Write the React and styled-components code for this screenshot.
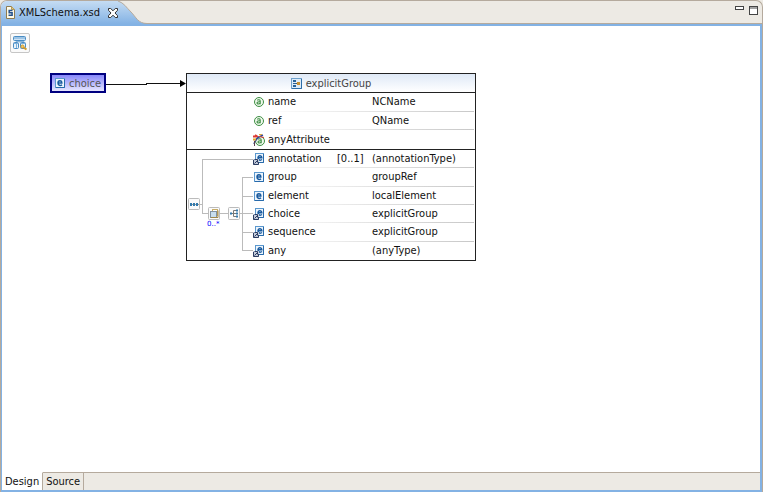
import React from "react";
import styled, { createGlobalStyle } from "styled-components";

const GlobalStyle = createGlobalStyle`
  * {
    box-sizing: border-box;
  }
  body {
    margin: 0;
    background: #edeae4;
    color: #111;
    font-family: "DejaVu Sans Condensed", "DejaVu Sans", sans-serif;
    font-size: 11px;
  }
  button {
    margin: 0;
    padding: 0;
    border: 0;
    background: none;
    color: inherit;
    font: inherit;
  }
  svg {
    display: block;
    flex-shrink: 0;
  }
`;

const Editor = styled.div`
  display: flex;
  flex-direction: column;
  min-height: 100vh;
  border: 1px solid #b5aa9d;
  border-bottom: 0;
  border-radius: 7px 7px 0 0;
  background: #edeae4;
  overflow: hidden;
`;

const TitleBar = styled.header`
  display: flex;
  height: 23px;
  border-bottom: 1px solid #b5aa9d;
`;

const FileTab = styled.div`
  display: flex;
  align-items: center;
  gap: 8px;
  height: 23px;
  padding-left: 4px;
  background: linear-gradient(#c5dcf3, #83b2e4);
`;

const FileName = styled.button`
  display: flex;
  align-items: center;
  gap: 3px;
`;

const WindowButtons = styled.div`
  display: flex;
  align-items: flex-start;
  gap: 5px;
  margin-left: auto;
  padding: 5px 4px 0 0;
`;

const Body = styled.main`
  display: flex;
  flex: 1;
  flex-direction: column;
  border: 2px solid #83b2e4;
  border-left-width: 1px;
  background: #fff;
`;

const Canvas = styled.div`
  flex: 1;
  padding: 7px 8px 20px;
`;

const ToolButton = styled.button`
  display: flex;
  align-items: center;
  justify-content: center;
  width: 20px;
  height: 20px;
  border: 1px solid #c6c6c6;
  border-radius: 2px;
  background: #fafafa;
`;

const Diagram = styled.div`
  display: flex;
  align-items: flex-start;
  padding: 20px 0 0 40px;
`;

const Node = styled.button`
  display: flex;
  align-items: center;
  gap: 3px;
  width: 56px;
  height: 20px;
  padding-left: 2px;
  border: 2px solid #000080;
  background: linear-gradient(#8888fa, #e6e6ff);
  color: #555;
`;

const Group = styled.section`
  width: 290px;
  border: 1px solid #222;
`;

const GroupHeader = styled.h1`
  display: flex;
  align-items: center;
  justify-content: center;
  gap: 4px;
  height: 18px;
  margin: 0;
  background: linear-gradient(#dfe9f6, #fff);
  color: #444;
  font-size: 11px;
  font-weight: normal;
`;

const Compartment = styled.div`
  display: flex;
  border-top: 1px solid #222;
`;

const TreeColumn = styled.div`
  width: 66px;
`;

const Fields = styled.table`
  flex: 1;
  height: ${props => props.$height};
  margin-right: 1px;
  border-collapse: collapse;
  table-layout: fixed;
`;

const Field = styled.tr`
  background: linear-gradient(90deg, #fff 10px, #c8c8c8) bottom / 100% 1px
    no-repeat;

  &:last-child {
    background: none;
  }
`;

const Cell = styled.td`
  width: ${props => props.$width};
  padding: 0;
  line-height: 16px;
  white-space: nowrap;
`;

const FieldName = styled.div`
  display: flex;
  align-items: center;
  gap: 3px;
`;

const PageTabs = styled.nav`
  display: flex;
  height: 18px;
  background: #edeae4;
`;

const PageTab = styled.button`
  padding: 0 3px;
  border-top: 1px solid ${props => (props.$active ? "#fff" : "#b5aa9d")};
  border-right: 1px solid #b5aa9d;
  background: ${props => (props.$active ? "#fff" : "#edeae4")};
`;

const TabsFill = styled.div`
  flex: 1;
  border-top: 1px solid #b5aa9d;
`;

const FileIcon = () => (
  <svg width="11" height="13" viewBox="0 0 11 13">
    <path d="M1.5 .5h5l3 3v9h-8z" fill="#fffbe8" stroke="#8f7b50" />
    <path d="M6.5 .5v3h3" fill="#e6c978" stroke="#b39a5a" />
    <path
      d="M7.5 4.5H4.2v2.2h2.9v2.6H3.5"
      fill="none"
      stroke="#24508c"
      strokeWidth="1.5"
    />
  </svg>
);

const CloseIcon = () => (
  <svg width="10" height="10" viewBox="0 0 10 10">
    <path
      d="M.5 .5h2.2L5 2.8 7.3 .5h2.2v1.8L7 5l2.5 2.7v1.8H7.3L5 7.2 2.7 9.5H.5V7.7L3 5 .5 2.3z"
      fill="#fff"
      stroke="#333"
    />
  </svg>
);

const TabCurve = () => (
  <svg width="32" height="23" viewBox="0 0 32 23">
    <defs>
      <linearGradient id="tabFill" x2="0" y2="1">
        <stop stopColor="#c5dcf3" />
        <stop offset="1" stopColor="#83b2e4" />
      </linearGradient>
    </defs>
    <path
      d="M0 0C6 2 8 6 13 11S20 22.5 29 22.5H32V23H0z"
      fill="url(#tabFill)"
    />
    <path
      d="M0 0C6 2 8 6 13 11S20 22.5 29 22.5H32"
      fill="none"
      stroke="#b5aa9d"
    />
  </svg>
);

const SchemaIcon = () => (
  <svg width="16" height="16" viewBox="0 0 16 16">
    <path d="M8 5v3M4 8.5V6.5h8v2" fill="none" stroke="#8ab6da" />
    <rect
      x="1.5"
      y="1.5"
      width="12"
      height="4"
      rx="1"
      fill="#cfe4f6"
      stroke="#4a8dc4"
    />
    <path d="M2 3h11" stroke="#6ba5d5" />
    <rect
      x="1.5"
      y="7.5"
      width="5"
      height="6"
      rx="1"
      fill="#e8f3fb"
      stroke="#4a8dc4"
    />
    <rect
      x="8.5"
      y="7.5"
      width="5"
      height="6"
      rx="1"
      fill="#e8f3fb"
      stroke="#4a8dc4"
    />
    <path d="M2 8.5h4M9 8.5h4M4.5 8v5" stroke="#7fb1da" />
    <circle cx="10.5" cy="11.5" r="1.5" fill="#f0c76a" stroke="#d09a2c" />
    <path d="M11.5 12.5l3 2" stroke="#d09a2c" strokeWidth="2" />
  </svg>
);

const ElementShape = () => (
  <>
    <rect
      x="1.5"
      y="1.5"
      width="9"
      height="9"
      fill="#edf5fc"
      stroke="#5b98ce"
    />
    <path d="M10.5 2v8.5H2" fill="none" stroke="#286aaa" />
    <path
      d="M4.2 6h3.6C7.8 3 4 3 4 6c0 2.7 2.4 2.9 4 1.8"
      fill="none"
      stroke="#195a9e"
      strokeWidth="1.5"
    />
  </>
);

// a referenced element carries a small shortcut mark in its corner
const ReferencedShape = () => (
  <>
    <rect
      x="2.5"
      y=".5"
      width="8"
      height="9"
      fill="#edf5fc"
      stroke="#5b98ce"
    />
    <path d="M10.5 1v8.5H5" fill="none" stroke="#286aaa" />
    <path
      d="M5.2 4.7h3.6C8.8 2 5 2 5 4.7c0 2.7 2.4 2.9 4 1.8"
      fill="none"
      stroke="#195a9e"
      strokeWidth="1.5"
    />
    <rect y="6" width="6" height="6" fill="#c3cbdb" />
    <path
      d="M.5 7v4.5h5V9M1.5 10.5l3.5-3.5M1.5 6.5h3v3"
      fill="none"
      stroke="#2b3c61"
    />
  </>
);

const ElementIcon = ({ reference }) => (
  <svg width="12" height="12" viewBox="0 0 12 12">
    {reference ? <ReferencedShape /> : <ElementShape />}
  </svg>
);

const AttributeIcon = ({ wildcard }) => (
  <svg width="12" height="12" viewBox="0 0 12 12">
    <circle
      cx={wildcard ? 7 : 6}
      cy={wildcard ? 7 : 6}
      r="4.5"
      fill="#f0f8ed"
      stroke="#3d8d43"
    />
    <path
      transform={wildcard ? "translate(1 1)" : undefined}
      d="M4.2 4.2c1-.8 3-.7 3 .8v3.2M7.2 5.8c-1.5-.1-3.2 0-3.2 1.2 0 1.4 2.3 1.3 3.2.1"
      fill="none"
      stroke="#3d8d43"
      strokeWidth="1.1"
    />
    {wildcard && (
      <>
        <path d="M0 2.5h4M2 1l3 2" stroke="#de3b35" strokeWidth="2" />
        <path d="M1 10c1-4 4-7 9-9" fill="none" stroke="#344a9c" strokeWidth="1.5" />
        <path d="M6 2.5l5 1" stroke="#de3b35" />
        <path d="M0 5.5h3" stroke="#e3a92d" strokeWidth="2" />
        <path d="M6 .5h3" stroke="#e3a92d" />
        <path d="M1.5 12V7" stroke="#5b3f50" />
      </>
    )}
  </svg>
);

const GroupIcon = () => (
  <svg width="11" height="11" viewBox="0 0 11 11">
    <rect
      x=".5"
      y=".5"
      width="10"
      height="10"
      fill="#dcebf8"
      stroke="#6fa1cc"
    />
    <path d="M10.5 1v9.5H1" fill="none" stroke="#2d6da8" />
    <path d="M2 2h3v2H2zM2 5h3v1H2zM2 7h3v2H2z" fill="#286299" />
    <path d="M5 5.5h2" stroke="#555" />
    <path d="M6 4h3v3H6z" fill="#c99131" />
  </svg>
);

const Arrow = () => (
  <svg width="80" height="20" viewBox="0 0 80 20">
    <path
      d="M0 11.5H40V10.5H75"
      fill="none"
      stroke="#111"
      shapeRendering="crispEdges"
    />
    <path d="M74 7l6 3.5-6 3.5z" />
  </svg>
);

const ModelTree = () => (
  <svg width="66" height="110" viewBox="0 0 66 110">
    <path
      d="M13 54.5h2.5M66 9.5H15.5v54H22M33 63.5h9M53 63.5h2.5M66 27.5H55.5v73H66M55.5 46.5H66M55.5 63.5H66M55.5 82.5H66"
      fill="none"
      stroke="#bbb"
      shapeRendering="crispEdges"
    />
    <g fill="#fbfbfb" stroke="#bbb">
      <rect x="1.5" y="48.5" width="11" height="11" rx="1" />
      <rect x="21.5" y="57.5" width="11" height="12" rx="1" />
      <rect x="41.5" y="57.5" width="11" height="12" rx="1" />
    </g>
    <path d="M3 54.5h9" stroke="#999" />
    <path d="M3 53h2v3H3zM6 53h2v3H6zM9 53h2v3H9z" fill="#3279ac" />
    <rect x="25.5" y="59.5" width="5" height="6" fill="#fff" stroke="#c9ae69" />
    <rect x="23.5" y="61.5" width="6" height="6" fill="#c8deef" stroke="#8192a3" />
    <path d="M24 67.5h7v-7" fill="none" stroke="#a08749" />
    <path
      d="M43 63.5h3M51 60.5h-4.5v6H51M46.5 63.5H51"
      fill="none"
      stroke="#777"
    />
    <path
      d="M43 62.5h2v2h-2zM49 59.5h2v2h-2zM49 62.5h2v2h-2zM49 65.5h2v2h-2z"
      fill="#3279ac"
    />
    <text x="20" y="76" fontFamily="DejaVu Sans" fontSize="7" fill="#0000ff">
      0..*
    </text>
  </svg>
);

const attributes = [
  { name: "name", type: "NCName" },
  { name: "ref", type: "QName" },
  { name: "anyAttribute", wildcard: true }
];

const elements = [
  { name: "annotation", occurs: "[0..1]", type: "(annotationType)", reference: true },
  { name: "group", type: "groupRef" },
  { name: "element", type: "localElement" },
  { name: "choice", type: "explicitGroup", reference: true },
  { name: "sequence", type: "explicitGroup", reference: true },
  { name: "any", type: "(anyType)", reference: true }
];

const FieldTable = ({ label, fields, height, icon: Icon }) => (
  <Fields aria-label={label} $height={height}>
    <tbody>
      {fields.map(({ name, occurs, type, ...kind }) => (
        <Field key={name}>
          <Cell $width="84px">
            <FieldName>
              <Icon {...kind} />
              {name}
            </FieldName>
          </Cell>
          <Cell $width="35px">{occurs}</Cell>
          <Cell>{type}</Cell>
        </Field>
      ))}
    </tbody>
  </Fields>
);

const App = () => (
  <>
    <GlobalStyle />
    <Editor>
      <TitleBar>
        <FileTab>
          <FileName>
            <FileIcon />
            XMLSchema.xsd
          </FileName>
          <button aria-label="Close">
            <CloseIcon />
          </button>
        </FileTab>
        <TabCurve />
        <WindowButtons>
          <button aria-label="Minimize">
            <svg width="9" height="5" viewBox="0 0 9 5">
              <rect x=".5" y=".5" width="8" height="3" fill="#fff" stroke="#444" />
            </svg>
          </button>
          <button aria-label="Maximize">
            <svg width="9" height="9" viewBox="0 0 9 9">
              <rect x=".5" y=".5" width="8" height="8" fill="#fff" stroke="#444" />
              <path d="M0 2h9" stroke="#444" />
            </svg>
          </button>
        </WindowButtons>
      </TitleBar>
      <Body>
        <Canvas>
          <ToolButton aria-label="Show schema index view">
            <SchemaIcon />
          </ToolButton>
          <Diagram>
            <Node>
              <ElementIcon />
              choice
            </Node>
            <Arrow />
            <Group>
              <GroupHeader>
                <GroupIcon />
                explicitGroup
              </GroupHeader>
              <Compartment>
                <TreeColumn />
                <FieldTable
                  label="Attributes"
                  fields={attributes}
                  height="56px"
                  icon={AttributeIcon}
                />
              </Compartment>
              <Compartment>
                <TreeColumn>
                  <ModelTree />
                </TreeColumn>
                <FieldTable
                  label="Elements"
                  fields={elements}
                  height="110px"
                  icon={ElementIcon}
                />
              </Compartment>
            </Group>
          </Diagram>
        </Canvas>
        <PageTabs>
          <PageTab $active>Design</PageTab>
          <PageTab>Source</PageTab>
          <TabsFill />
        </PageTabs>
      </Body>
    </Editor>
  </>
);

export default App;
